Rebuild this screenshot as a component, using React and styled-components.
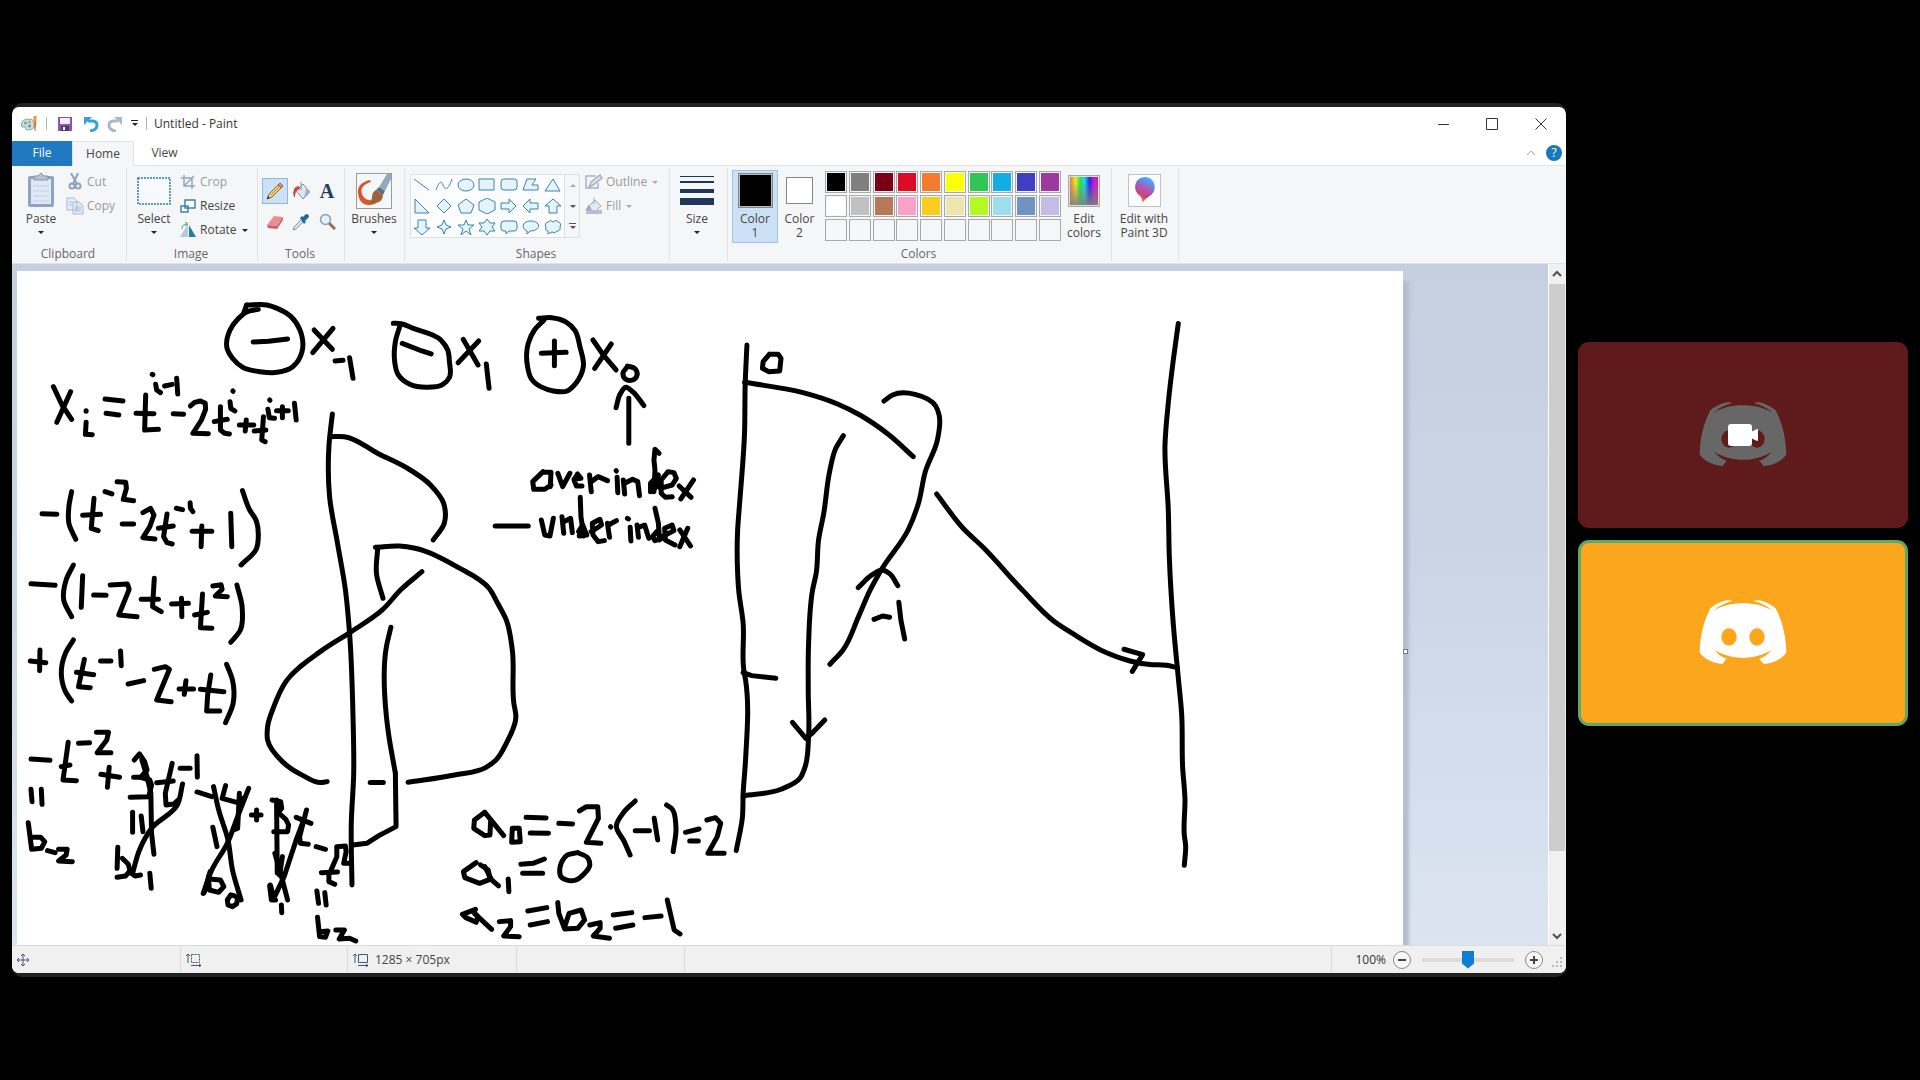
import React from "react";
import styled, { createGlobalStyle, css } from "styled-components";

const GlobalStyle = createGlobalStyle`
  * { box-sizing: border-box; }
  body { margin: 0; background: #000; overflow: hidden; }
  button, input { font: inherit; color: inherit; margin: 0; }
  button { padding: 0; border: 0; background: none; }
  svg { display: block; flex: none; }
`;

const Call = styled.div`
  display: flex;
  align-items: center;
  gap: 12px;
  min-height: 100vh;
  padding: 0 12px;
  background: #000;
  font-family: "Open Sans", "Noto Sans", sans-serif;
  font-size: 12px;
  line-height: 14px;
  color: #454545;
`;

/* ---------- Shared screen: Paint window ---------- */

const PaintWindow = styled.main`
  flex: 1;
  min-width: 0;
  aspect-ratio: 16 / 9;
  display: flex;
  flex-direction: column;
  overflow: hidden;
  border-radius: 10px;
  background: #222;
  padding: 4px 0;
`;

const Frame = styled.div`
  flex: 1;
  min-height: 0;
  display: flex;
  flex-direction: column;
  overflow: hidden;
  border-radius: 7px;
  background: #fff;
`;

const TitleBar = styled.header`
  display: flex;
  align-items: center;
  height: 34px;
  padding: 0 16px 0 8px;
  color: #333;
`;

const QuickBar = styled.div`
  display: flex;
  align-items: center;
  gap: 8px;
`;

const Divider = styled.span`
  width: 1px;
  height: 13px;
  background: #b4b4b4;
`;

const Title = styled.h1`
  margin: 0 auto 0 7px;
  font-size: 12px;
  font-weight: 400;
  line-height: 16px;
`;

const WindowButtons = styled.div`
  display: flex;
  gap: 31px;
`;

const IconButton = styled.button`
  display: flex;
  align-items: center;
  justify-content: center;
  width: ${(p) => p.$w || 18}px;
  height: ${(p) => p.$h || 18}px;
`;

const TabBar = styled.nav`
  display: flex;
  align-items: stretch;
  height: 25px;
  padding-right: 4px;
  border-bottom: 1px solid #e2e3e6;
`;

const Tab = styled.button`
  width: ${(p) => p.$w}px;
  margin-bottom: -1px;
  ${(p) =>
    p.$kind === "file" &&
    css`
      background: #2179c1;
      color: #fff;
    `}
  ${(p) =>
    p.$kind === "active" &&
    css`
      background: #f5f6f8;
      border: 1px solid #e2e3e6;
      border-bottom: 0;
    `}
`;

const TabActions = styled.div`
  display: flex;
  align-items: center;
  gap: 6px;
  margin-left: auto;
`;

const Help = styled.button`
  width: 16px;
  height: 16px;
  border-radius: 50%;
  background: #1878bd;
  color: #fff;
  font-size: 12px;
  line-height: 16px;
`;

const Ribbon = styled.div`
  display: flex;
  height: 98px;
  padding: 2px 0;
  background: #f5f6f8;
  border-bottom: 1px solid #dfe2e7;
`;

const Group = styled.section`
  display: flex;
  flex-direction: column;
  justify-content: space-between;
  width: ${(p) => p.$w}px;
  padding-top: 2px;
  border-right: 1px solid #e1e3e7;
`;

const Tools = styled.div`
  display: flex;
  align-items: flex-start;
  gap: ${(p) => p.$gap || 0}px;
  padding-left: ${(p) => p.$pl || 0}px;
`;

const GroupName = styled.h2`
  margin: 0;
  padding-right: 2px;
  font-size: 12px;
  font-weight: 400;
  line-height: 14px;
  text-align: center;
  color: #666;
`;

const BigButton = styled.button`
  display: flex;
  flex-direction: column;
  align-items: center;
  width: ${(p) => p.$w}px;
  height: 73px;
  border: 1px solid ${(p) => (p.$on ? "#9cc3e8" : "transparent")};
  background: ${(p) => (p.$on ? "#cce1f6" : "none")};
`;

const BigIcon = styled.span`
  display: flex;
  align-items: center;
  justify-content: center;
  height: 38px;
  margin: 1px 0 2px;
`;

const Caret = styled.span`
  width: 0;
  margin: ${(p) => (p.$side ? "1px 0 0 2px" : "5px 0 0")};
  border: 3px solid transparent;
  border-bottom: 0;
  border-top-color: ${(p) => (p.$off ? "#aaa" : "#222")};
`;

const Stack = styled.div`
  display: flex;
  flex-direction: column;
`;

const SmallButton = styled.button`
  display: flex;
  align-items: center;
  gap: 3px;
  height: 24px;
  color: ${(p) => (p.disabled ? "#9a9a9a" : "#454545")};
`;

const SmallIcon = styled.span`
  display: flex;
  justify-content: center;
  width: 19px;
`;

const ToolGrid = styled.div`
  display: grid;
  grid-template-columns: repeat(3, 26px);
  grid-auto-rows: 26px;
  row-gap: 5px;
  padding: 8px 0 0 4px;
`;

const ToolButton = styled.button`
  display: flex;
  align-items: center;
  justify-content: center;
  border: 1px solid ${(p) => (p.$on ? "#8fb8e0" : "transparent")};
  background: ${(p) => (p.$on ? "#cce1f6" : "none")};
`;

const Gallery = styled.div`
  display: flex;
  width: 170px;
  height: 64px;
  margin-top: 4px;
  border: 1px solid #dcdfe4;
  background: #fbfcfe;
`;

const ShapeGrid = styled.div`
  flex: 1;
  display: grid;
  grid-template-columns: repeat(7, 1fr);
  grid-template-rows: repeat(3, 1fr);
`;

const ShapeButton = styled.button`
  display: flex;
  align-items: center;
  justify-content: center;
`;

const GalleryScroll = styled.div`
  display: grid;
  width: 15px;
  border-left: 1px solid #dcdfe4;
  background: #f5f6f8;
`;

const Preview = styled.span`
  width: ${(p) => p.$s}px;
  height: ${(p) => p.$s}px;
  border: 1px solid #868686;
  background: ${(p) => p.$c};
  box-shadow: inset 0 0 0 1px ${(p) => p.$ring};
`;

const Palette = styled.div`
  display: grid;
  grid-template-columns: repeat(10, 22px);
  grid-auto-rows: 22px;
  justify-content: space-between;
  row-gap: 2px;
  width: 236px;
  margin: 1px 0 0 4px;
`;

const Swatch = styled.button`
  padding: 1px;
  border: 1px solid #a9a9a9;
  background: ${(p) => p.$c || "transparent"} content-box;
`;

/* ---------- Drawing area ---------- */

const Workspace = styled.div`
  flex: 1;
  min-height: 0;
  display: flex;
  background: linear-gradient(#c5cfde, #cbd6e5 45%, #dce4f1);
`;

const Viewport = styled.div`
  position: relative;
  flex: 1;
  min-width: 0;
  overflow: hidden;
  padding: 7px 0 0 5px;
`;

const Paper = styled.div`
  position: relative;
  width: 1386px;
  height: 757px;
  background: #fff;
  box-shadow: 7px 9px 3px -1px #b3bfd0;
`;

const Handle = styled.i`
  position: absolute;
  left: 100%;
  top: 50%;
  width: 5px;
  height: 5px;
  border: 1px solid #777;
  background: #fff;
`;

const ScrollBar = styled.div`
  display: flex;
  flex-direction: column;
  width: 18px;
  background: #f0f0f0;
  border-left: 1px solid #fff;
`;

const Thumb = styled.div`
  height: 567px;
  margin: 0 1px auto 0;
  background: #cdcdcd;
`;

/* ---------- Status bar ---------- */

const StatusBar = styled.footer`
  display: flex;
  align-items: center;
  height: 28px;
  background: #f0f0f0;
  border-top: 1px solid #dcdcdc;
`;

const StatusCell = styled.div`
  display: flex;
  align-items: center;
  gap: 6px;
  width: ${(p) => p.$w}px;
  height: 26px;
  padding-left: 5px;
  border-right: 1px solid #dadada;
`;

const Zoom = styled.div`
  display: flex;
  align-items: center;
  gap: 7px;
  margin-left: auto;
  padding-right: 2px;
  color: #333;
`;

const RoundButton = styled.button`
  display: flex;
  align-items: center;
  justify-content: center;
  width: 18px;
  height: 18px;
  border: 1px solid #8a8a8a;
  border-radius: 50%;
  background: #f7f7f7;
`;

const ZoomSlider = styled.input`
  appearance: none;
  width: 92px;
  height: 18px;
  margin: 0 4px;
  background: linear-gradient(#dcdcdc, #dcdcdc) center / 100% 4px no-repeat;
  &::-webkit-slider-thumb {
    appearance: none;
    width: 12px;
    height: 18px;
    background: #0f7dd2;
    clip-path: polygon(0 0, 100% 0, 100% 72%, 50% 100%, 0 72%);
  }
`;

const Grip = styled.svg`
  align-self: flex-end;
  margin-left: 2px;
`;

/* ---------- Participants ---------- */

const Participants = styled.aside`
  display: flex;
  flex-direction: column;
  gap: 12px;
  width: 330px;
  padding-bottom: 12px;
`;

const Tile = styled.div`
  position: relative;
  display: flex;
  align-items: center;
  justify-content: center;
  height: 186px;
  padding-bottom: 2px;
  border-radius: 11px;
  background: ${(p) => p.$bg};
  color: ${(p) => p.$fg};
  border: 3px solid ${(p) => p.$ring};
`;

const CameraBadge = styled.span`
  position: absolute;
  inset: 0;
  display: flex;
  align-items: center;
  justify-content: center;
  color: #fff;
`;

const LOGO_HALF =
  "M131 10C95 10 67 17 40 33C55 19 75 9 98 3C90 0 85 0 75 2C60 6 45 14 32 25C12 64 1 107 0 157C12 177 40 190 68 192L81 176C68 172 54 162 44 149C70 165 100 173 131 173ZM88 85a23 26 0 1 0 .1 0Z";

const ChatLogo = () => (
  <svg width="88" height="64" viewBox="0 0 260 192" fill="currentColor" fillRule="evenodd">
    <path d={LOGO_HALF} />
    <path d={LOGO_HALF} transform="translate(260 0) scale(-1 1)" />
  </svg>
);

/* ---------- Ribbon icons ---------- */

const blue = "#3f81a8";
const shapes = [
  ["Line", <path d="M1 2l15 11" />],
  ["Curve", <path d="M1 13C4 5 6 3 8 8s5 6 9-6" fill="none" />],
  ["Oval", <ellipse cx="9" cy="8" rx="8" ry="6" />],
  ["Rectangle", <path d="M1 2h15v11H1z" />],
  ["Rounded rectangle", <rect x="1" y="2" width="16" height="11" rx="3" />],
  ["Polygon", <path d="M5 2h9l-4 6h6v5H1z" />],
  ["Triangle", <path d="M9 2l7 12H1z" />],
  ["Right triangle", <path d="M2 1v14h14z" />],
  ["Diamond", <path d="M9 1l7 7-7 7-7-7z" />],
  ["Pentagon", <path d="M9 1l8 6-3 8H4L1 7z" />],
  ["Hexagon", <path d="M9 0l8 4v8l-8 4-8-4V4z" />],
  ["Right arrow", <path d="M1 5h8V1l7 7-7 7v-4H1z" />],
  ["Left arrow", <path d="M16 5H8V1L1 8l7 7v-4h8z" />],
  ["Up arrow", <path d="M5 15V8H1l8-7 8 7h-4v7z" />],
  ["Down arrow", <path d="M5 1v8H1l8 7 8-7h-4V1z" />],
  ["Four-point star", <path d="M9 1l2 5 5 2-5 2-2 5-2-5-5-2 5-2z" />],
  ["Five-point star", <path d="M9 1l2 5h6l-5 4 2 6-5-4-5 4 2-6-5-4h6z" />],
  ["Six-point star", <path d="M9 0l3 4h5l-3 4 3 4h-5l-3 4-3-4H1l3-4-3-4h5z" />],
  ["Rounded callout", <path d="M4 2h10q3 0 3 3v4q0 3-3 3H9l-3 3v-3H4q-3 0-3-3V5q0-3 3-3z" />],
  ["Oval callout", <path d="M5 12C0 10 0 5 4 3s10-1 12 2-1 7-8 7l-3 3z" />],
  ["Cloud callout", <path d="M4 3q3-3 5 0 4-3 5 0 4 1 2 5 1 4-3 4-2 3-5 1l-4 2v-3Q0 11 2 8 0 4 4 3z" />],
];

const paletteColors = [
  "#000000", "#7f7f7f", "#7b0016", "#dd0a28", "#f27b30", "#fdfd05", "#2fc655", "#11ade4", "#403fc4", "#9c399f",
  "#ffffff", "#c1c1c1", "#b57957", "#f9a1c8", "#f9cd1d", "#ece6ae", "#b3f922", "#9cdeea", "#7093c1", "#c6bbe5",
  null, null, null, null, null, null, null, null, null, null,
];

const PasteIcon = () => (
  <svg width="28" height="36" viewBox="0 0 28 36">
    <rect x="1" y="3" width="26" height="31" rx="2" fill="#8fa3c4" />
    <rect x="4" y="6" width="20" height="25" fill="#dfe8f5" />
    <path d="M6 13h16M6 18h16M6 23h16M6 28h16" stroke="#c3d0e4" />
    <path d="M7 3h4l3-3 3 3h4v4H7z" fill="#b7c1d1" stroke="#8794ab" />
  </svg>
);
const CutIcon = () => (
  <svg width="14" height="17" viewBox="0 0 14 17" fill="none" stroke="#8ea0bb" strokeWidth="2">
    <path d="M3 0l6 11M10 0L5 11" />
    <circle cx="4" cy="13" r="2.500" />
    <circle cx="10" cy="13" r="2.500" />
  </svg>
);
const CopyIcon = () => (
  <svg width="18" height="18" viewBox="0 0 18 18" fill="#e8eef7" stroke="#a9b8d0">
    <path d="M1 1h7l3 3v9H1zM7 5h6l4 4v8H7z" />
    <path d="M9 10h6M9 12h6M9 14h6M3 5h3M3 8h3" />
  </svg>
);
const SelectIcon = () => (
  <svg width="34" height="28" viewBox="0 0 34 28">
    <rect x="1" y="1" width="32" height="26" fill="#f7fafd" stroke="#2f78b5" strokeWidth="1.500" strokeDasharray="2 1" />
  </svg>
);
const CropIcon = () => (
  <svg width="14" height="14" viewBox="0 0 14 14" fill="none" stroke="#93a6c4" strokeWidth="1.500">
    <path d="M3 0v11h11M0 3h11v11M3 11L13 1" />
  </svg>
);
const ResizeIcon = () => (
  <svg width="16" height="14" viewBox="0 0 16 14" fill="#fff" stroke="#3c83ab" strokeWidth="1.500">
    <path d="M5 1h10v8H5zM1 7h7v6H1z" />
  </svg>
);
const RotateIcon = () => (
  <svg width="18" height="16" viewBox="0 0 18 16">
    <path d="M9 2v13H1z" fill="#b9c9d8" />
    <path d="M10 3l7 12h-7z" fill="#1d7fae" />
    <path d="M3 7q0-5 5-5M6 0l3 2-3 2" fill="none" stroke="#3c9bc8" />
  </svg>
);
const PencilIcon = () => (
  <svg width="18" height="18" viewBox="0 0 18 18">
    <path d="M1 17l2-5 9-9 3 3-9 9z" fill="#f6d27c" stroke="#7c6a4b" />
    <path d="M12 3l2-2 3 3-2 2z" fill="#d98b84" stroke="#8b5d58" />
    <path d="M1 17l1-3 2 2z" fill="#333" />
    <path d="M5 13l8-8" stroke="#b5893d" />
  </svg>
);
const FillIcon = () => (
  <svg width="20" height="18" viewBox="0 0 20 18">
    <path d="M5 9l7-7 7 8-7 7z" fill="#dce7f1" stroke="#7c93ab" />
    <path d="M12 17l7-7-4-4-1 6z" fill="#9db6cf" />
    <path d="M10 0v8" stroke="#7c93ab" />
    <path d="M3 15Q0 5 8 4l1 3Q4 8 4 15z" fill="#cf4a35" />
  </svg>
);
const LetterIcon = styled.span`
  font: 700 20px/20px "Liberation Serif", serif;
  color: #24395c;
`;
const EraserIcon = () => (
  <svg width="18" height="16" viewBox="0 0 18 16">
    <path d="M1 11l7-9 9 1-6 9z" fill="#eb8f94" />
    <path d="M1 11l10 1v3L2 14zM11 12l6-9v3l-6 9z" fill="#c8606a" />
  </svg>
);
const PickerIcon = () => (
  <svg width="18" height="18" viewBox="0 0 18 18">
    <path d="M1 17l1-3 8-8 2 2-8 8z" fill="#d5e3ee" stroke="#7f99af" />
    <path d="M8 5l2-2 1 1 3-3q3 0 3 3l-4 4 1 1-2 2z" fill="#20699f" />
  </svg>
);
const LensIcon = () => (
  <svg width="17" height="17" viewBox="0 0 17 17">
    <path d="M10 10l6 6" stroke="#8d6f5a" strokeWidth="3" />
    <circle cx="6.500" cy="6.500" r="5" fill="#e6f0f8" stroke="#8d9dad" strokeWidth="1.500" />
  </svg>
);
const BrushIcon = () => (
  <svg width="36" height="36" viewBox="0 0 36 36">
    <rect x=".5" y=".5" width="35" height="35" fill="#f4f8fb" stroke="#9b9b9b" />
    <path d="M14 7Q1 10 2 20c1 10 7 14 17 11l4-5C15 29 8 27 6 21S8 11 15 9z" fill="#e0512c" />
    <path d="M31 1L23 14l6 4 6-12V1z" fill="#93a9bd" />
    <path d="M23 14l6 4-2 4-7-5z" fill="#5b6f80" />
    <path d="M20 17l7 5q0 7-8 8-4 1-7 0 4-2 4-6 0-5 4-7z" fill="#9c6436" />
  </svg>
);
const OutlineIcon = () => (
  <svg width="18" height="16" viewBox="0 0 18 16" fill="none" stroke="#a7b2c6" strokeWidth="1.500">
    <path d="M11 2H1v12h12V9" />
    <path d="M4 13l2-5 9-7 2 3-9 7z" fill="#dce2ec" />
  </svg>
);
const FillShapeIcon = () => (
  <svg width="18" height="16" viewBox="0 0 18 16">
    <path d="M1 12h16v4H1z" fill="#b6c0d2" />
    <path d="M4 8l6-6 6 6-5 5H7z" fill="#e2e8f1" stroke="#9eacc3" />
    <path d="M9 0v6M4 7l-3 5h5z" fill="#9eacc3" stroke="#9eacc3" />
  </svg>
);
const SizeIcon = () => (
  <svg width="34" height="32" viewBox="0 0 34 32" fill="#22365c">
    <path d="M0 1h34v1H0zM0 6h34v2H0zM0 14h34v4H0zM0 23h34v7H0z" />
  </svg>
);
const SpectrumIcon = () => (
  <svg width="32" height="32" viewBox="0 0 32 32">
    <defs>
      <linearGradient id="hue">
        <stop offset="0" stopColor="#e87a3a" />
        <stop offset=".2" stopColor="#e8e832" />
        <stop offset=".36" stopColor="#2be53b" />
        <stop offset=".52" stopColor="#1fd5ea" />
        <stop offset=".7" stopColor="#2b23e8" />
        <stop offset=".88" stopColor="#d41ad1" />
        <stop offset="1" stopColor="#d8207a" />
      </linearGradient>
      <linearGradient id="grey" x2="0" y2="1">
        <stop offset=".2" stopColor="#808080" stopOpacity="0" />
        <stop offset="1" stopColor="#808080" stopOpacity=".9" />
      </linearGradient>
    </defs>
    <rect x=".5" y=".5" width="31" height="31" fill="#ddd" stroke="#aaa" />
    <rect x="2" y="2" width="28" height="28" fill="url(#hue)" />
    <rect x="2" y="2" width="28" height="28" fill="url(#grey)" />
  </svg>
);
const Paint3DIcon = () => (
  <svg width="33" height="33" viewBox="0 0 33 33">
    <defs>
      <linearGradient id="drop" x1=".7" y1="0" x2=".3" y2="1">
        <stop offset="0" stopColor="#43b9f3" />
        <stop offset=".4" stopColor="#7c6be0" />
        <stop offset=".7" stopColor="#c93a77" />
        <stop offset="1" stopColor="#f29a3c" />
      </linearGradient>
    </defs>
    <rect x=".5" y=".5" width="32" height="32" fill="#fcfcfd" stroke="#c2c2c2" />
    <path d="M14 29q1-5-3-8C4 15 7 3 17 3s13 13 6 18q-5 3-9 8z" fill="url(#drop)" />
    <path d="M8 14q5-7 11-4t6 3q0 6-5 8t-8-1-4-6z" fill="#e94f83" opacity=".35" />
  </svg>
);
const AppIcon = () => (
  <svg width="18" height="17" viewBox="0 0 17 17">
    <path d="M1 10Q1 4 8 4q6 0 6 5 0 6-7 6-2 0-2-2t-2-1-2-2z" fill="#c9dfe4" stroke="#7fa6ad" />
    <circle cx="5" cy="8" r="1.500" fill="#6db56d" />
    <circle cx="9" cy="7" r="1.500" fill="#e8a23d" />
    <circle cx="9" cy="11" r="1.500" fill="#5b97d6" />
    <path d="M13 1h3v6h-3z" fill="#ea9a3d" />
    <path d="M13 7h3l-1 9h-1z" fill="#e07f2b" />
  </svg>
);
const SaveIcon = () => (
  <svg width="16" height="16" viewBox="0 0 16 16">
    <path d="M1 1h14v14H1z" fill="#8657a8" />
    <path d="M3 2h10v6H3z" fill="#f2ecf7" />
    <path d="M4 10h8v5H4z" fill="#4e3866" />
    <path d="M6 11h2v3H6z" fill="#fff" />
  </svg>
);
const UndoIcon = ({ color, flip }) => (
  <svg width="16" height="16" viewBox="0 0 16 16">
    <g transform={flip ? "translate(16 0) scale(-1 1)" : undefined}>
      <path d="M5 5h4q5 0 5 4 0 5-7 6" fill="none" stroke={color} strokeWidth="3" />
      <path d="M1 1l8 0-8 8z" fill={color} />
    </g>
  </svg>
);
const SmallCaret = ({ up, bar, color = "#555" }) => (
  <svg width="9" height="8" viewBox="0 0 9 8" fill={color}>
    {bar && <path d="M1 0h7v1H1z" />}
    <path d={up ? "M2 6l3-3 3 3z" : "M2 3h6L5 6z"} />
  </svg>
);
const Chevron = ({ up, color = "#505050", w = 1 }) => (
  <svg width="10" height="8" viewBox="0 0 10 8" fill="none" stroke={color} strokeWidth={w}>
    <path d={up ? "M1 6l4-4 4 4" : "M1 2l4 4 4-4"} />
  </svg>
);

/* ---------- Pencil strokes on the paper ----------
   Each sheet keeps its own origin and scale; one string is one stroke of "x,y" points. */

const sheets = [
  {
    at: "translate(0 290) scale(.3444 .3333)",
    curves: [
      "716,45 775,45 805,55 845,80 870,118 877,140 877,185 850,230 805,247 755,245 705,232 675,205 660,178 668,120 690,88 716,66 750,58",
      "1142,100 1165,101 1200,115 1280,150 1300,180 1305,215 1305,262 1285,284 1240,292 1190,283 1155,252 1146,215 1148,155 1162,105",
      "208,605 200,650 200,700 220,748",
      "704,602 725,660 743,690 750,740 745,775 700,825",
      "965,372 955,470 957,620 980,760 1003,900 1015,1030 1025,1280 1027,1450 1020,1600 1022,1785",
      "960,440 1000,440 1100,492 1180,533 1250,585 1288,640 1290,700 1258,750",
      "1090,772 1160,768 1205,775 1330,832 1420,895 1445,940 1470,990 1487,1075 1492,1240 1498,1280 1470,1360 1440,1410 1410,1433 1320,1455 1185,1477",
      "1097,772 1093,850 1112,925",
      "1225,845 1165,898 1110,960 1020,1025 930,1085 830,1175 795,1250 777,1310 777,1350 820,1415 880,1457 930,1478 950,1475",
      "1135,1012 1122,1070 1122,1280 1128,1330 1148,1450",
    ],
    lines: [
      "716,45 708,68", "735,156 780,154 835,147",
      "912,120 965,178", "967,115 908,188", "973,213 996,211", "1015,203 1025,265",
      "1168,160 1225,183 1252,192", "1345,148 1388,225", "1390,153 1330,218", "1412,222 1420,295",
      "155,290 180,345 208,388", "205,305 165,397", "250,362 250,364", "250,397 248,433 268,434",
      "305,327 357,333", "308,370 345,375", "423,315 420,420 460,418", "395,370 447,371",
      "442,253 444,254", "452,283 455,300 466,308", "478,288 500,283", "513,265 516,312", "503,371 533,373",
      "553,348 565,337 582,333 596,340 597,358 585,390 560,430 605,431",
      "640,350 640,420 652,430 666,432", "622,395 660,388", "676,303 677,304", "668,335 670,355 682,363",
      "695,405 737,405", "715,390 712,423", "765,380 760,450 770,455", "738,423 772,420",
      "783,330 784,331", "778,358 782,383 797,385", "803,362 837,362", "820,350 820,383", "855,340 860,390",
      "122,671 165,673", "273,625 265,715 285,722", "240,676 292,673", "305,605 325,612",
      "340,575 365,577 367,595 358,628 388,632", "355,702 388,702",
      "415,668 437,655 447,675 435,710 415,743 450,747",
      "485,672 475,740 485,758 500,762", "460,715 503,708", "512,655 530,659", "552,638 553,655 560,665",
      "558,724 615,724", "586,708 584,770", "670,670 673,770",
      "1075,1478 1113,1478", "1148,1450 1150,1610 1100,1637 1065,1660 1025,1665",
    ],
  },
  {
    at: "translate(0 580) scale(.3444 .3333)",
    curves: [
      "213,-45 192,0 185,60 208,110", "688,15 703,80 698,150 670,187",
      "213,180 190,220 178,280 190,335 208,363", "658,253 675,300 677,370 655,428",
      "530,612 515,675 440,745 405,810 385,880",
      "722,625 690,710 660,790 615,870 590,940", "620,620 635,690 662,780 675,870 700,960",
    ],
    lines: [
      "90,11 160,16", "240,-13 236,82", "272,45 308,46", "320,15 370,12 375,28 345,105 398,110",
      "448,-5 443,80 468,95", "410,58 460,58", "498,72 547,70", "527,55 528,110",
      "588,42 582,143 615,145", "565,105 602,97", "618,18 642,14 645,28 625,48 660,50",
      "88,243 133,248", "116,210 115,272", "245,238 228,320 262,323", "222,277 272,284",
      "292,243 322,243", "350,213 352,257", "372,312 417,302", "448,268 480,260 492,268 455,360 497,365",
      "520,327 562,327", "540,302 535,343", "612,285 603,345 600,393 638,393", "582,328 650,335",
      "90,537 145,541", "198,487 183,600 222,602", "178,560 203,555", "228,490 260,488",
      "280,457 315,457 310,480 282,518 322,518", "293,583 347,592", "317,562 312,622",
      "390,540 405,522 420,545 427,570 408,592 388,592", "408,592 435,600 440,615 432,650 378,652",
      "412,540 427,590 438,640 440,760 447,823", "425,590 438,615", "500,550 480,640 482,675 505,672 518,660", "455,608 503,603",
      "523,565 552,565", "572,527 573,592", "90,628 93,665", "120,628 122,673",
      "82,728 92,808 120,805 130,785 118,772 92,772", "138,812 160,818", "170,808 195,808 192,825 170,843 210,845",
      "385,697 385,757", "410,708 415,755", "342,802 340,865", "355,835 372,852 378,872 365,888 340,892",
      "375,875 392,888 408,885", "435,880 439,925", "572,636 615,650", "655,617 645,655 690,668 705,655",
      "695,640 690,745 682,748", "618,742 630,800", "610,875 593,938", "605,890 608,930 635,937 650,920 640,900 615,898",
      "670,945 660,960 662,975 675,980 687,972 690,955 680,947 670,945", "730,705 758,705", "745,690 745,720",
      "790,660 815,665 818,685 805,700", "803,660 805,880", "812,702 830,718 838,735 835,755 795,755",
      "890,690 870,770 872,790 895,793", "860,712 903,730", "880,725 860,780 825,890 795,955 785,915",
      "783,918 788,960 800,960", "798,820 815,880 835,960", "820,830 812,885", "806,840 812,885", "817,975 818,998",
      "918,800 945,808", "978,803 978,830 955,885 955,905 972,913", "933,878 980,876", "978,800 1003,798 1005,815 998,850 1015,850",
      "920,933 925,970", "943,938 947,975", "922,1012 928,1070 945,1072 952,1053 930,1055",
      "975,1050 1000,1050 985,1077 1015,1075 1033,1083",
    ],
  },
  {
    at: "translate(500 290) scale(.3444 .3333)",
    curves: [
      "112,85 150,83 190,95 218,122 232,170 242,230 220,280 195,303 155,303 90,265 80,230 82,160 100,120 128,90",
      "717,165 712,280 710,430 695,650 690,720 690,850 693,900 706,1000 708,1140 713,1170 713,1410 706,1510 704,1580 686,1682",
      "710,277 880,308 980,342 1045,375 1130,435 1200,500",
      "997,437 975,475 958,540 940,670 925,750 918,850 908,898 896,1060 895,1200 896,1340 886,1430 871,1465 816,1498 706,1518",
      "1115,333 1140,315 1205,313 1265,348 1275,375 1270,450 1235,545 1215,640 1185,720 1110,835 1075,900 1041,980 996,1080 958,1123",
      "337,353 350,310 365,292 385,305 418,347",
      "1040,893 1080,855 1110,840 1130,850 1155,887",
      "370,230 357,250 365,268 385,270 398,255 393,237 370,228",
    ],
    lines: [
      "-14,708 82,708", "120,190 192,187", "158,153 158,227", "270,150 300,195 337,240", "323,162 275,235", "374,325 374,460",
      "125,545 95,575 98,598 130,598 148,585", "125,547 148,547 146,590",
      "168,550 182,590 203,550", "215,568 235,565 225,552 215,570 222,588 238,588",
      "260,555 265,605", "265,575 285,560 312,572", "337,542 338,543", "340,562 342,608",
      "358,570 362,612", "362,580 385,568 400,575 405,617", "462,490 450,478 447,510 450,540 447,605",
      "437,605 437,580 460,555 455,590 437,605", "465,595 500,585 512,565 505,548 488,545 468,570 468,610 480,622 500,620",
      "520,588 555,622", "562,570 525,627", "120,690 130,735 145,738 155,685", "180,680 185,730",
      "185,695 205,685 210,728", "233,622 235,680 243,735", "243,738 228,725 240,705 252,735 230,738",
      "265,725 295,705 290,688 268,700 270,735 285,755 303,752", "312,700 318,742", "315,705 338,692",
      "370,685 373,687", "378,712 380,753", "398,705 402,742", "402,712 420,705 432,745",
      "450,655 460,700 463,750", "450,752 443,740 455,725 470,745 450,752", "475,738 505,722 500,705 478,715 480,750 508,765",
      "522,720 553,768", "545,715 522,770", "782,193 808,193 816,205 812,243 780,245 762,235 764,215 782,193",
      "849,1297 888,1345 906,1330 943,1290", "706,1148 731,1157 801,1165",
      "1086,988 1111,978 1131,982", "1158,937 1164,990 1175,1047",
    ],
  },
  {
    at: "translate(440 580) scale(.3444 .3333)",
    curves: [
      "567,663 535,695 512,738 535,785 552,825", "658,675 672,685 685,740 677,815",
      "400,818 430,835 435,855 420,880 388,902 350,888 348,865 370,825 400,818",
    ],
    lines: [
      "130,697 100,720 98,745 130,767 145,765 147,725", "130,697 185,767", "210,745 230,745 233,785 208,787 210,745",
      "250,712 308,714", "262,759 315,760", "345,730 385,732", "405,693 425,680 458,680 460,715 425,787 467,790",
      "495,740 496,741", "567,752 608,752", "622,715 632,780", "713,757 752,747", "725,783 750,783",
      "775,720 800,713 815,730 805,770 778,820 825,820",
      "105,848 68,875 72,893 115,910 145,898 140,870 118,855", "130,860 150,900 170,918", "198,897 200,935",
      "235,853 270,850 303,837", "240,880 298,880", "103,988 65,1003 75,1013 105,1027 110,1010 95,993",
      "100,1000 150,1048", "172,1025 205,1022 205,1040 185,1068 230,1070", "255,993 310,983", "262,1035 312,1025",
      "342,968 345,1000 362,1047 400,1045 420,1020 410,990 375,1000 362,1040",
      "435,1035 465,1028 465,1045 445,1068 492,1075", "503,1005 557,998", "510,1045 560,1035",
      "595,1013 642,1008", "660,960 680,1050 697,1062",
    ],
  },
  {
    at: "translate(840 310) scale(.3333 .3571)",
    curves: [
      "290,515 370,612 430,665 545,782 640,870 700,907 800,960 870,983 930,993 980,995 1012,1002",
      "1015,38 1000,140 985,260 975,380 985,560 988,690 1000,880 1015,1030 1025,1130 1028,1280 1035,1370 1033,1470 1037,1500 1033,1555",
    ],
    lines: ["852,950 908,965 877,1012"],
  },
];

/* A smooth line through the points: slopes weighted by the length of the
   neighbouring segments, written as cubic pieces. */
const smooth = (text) => {
  const p = text.split(" ").map((s) => s.split(",").map(Number));
  const last = p.length - 1;
  const len = (i) => Math.hypot(p[i + 1][0] - p[i][0], p[i + 1][1] - p[i][1]) || 1;
  const step = (i, k) => (p[i + 1][k] - p[i][k]) / len(i);
  const slope = (i, k) => {
    if (i === 0) return step(0, k);
    if (i === last) return step(last - 1, k);
    const before = len(i - 1);
    const after = len(i);
    return (step(i - 1, k) * after + step(i, k) * before) / (before + after);
  };
  let d = `M${p[0]}`;
  for (let i = 0; i < last; i += 1) {
    const t = len(i) / 3;
    const c1 = [0, 1].map((k) => p[i][k] + slope(i, k) * t);
    const c2 = [0, 1].map((k) => p[i + 1][k] - slope(i + 1, k) * t);
    d += `C${c1.join(" ")} ${c2.join(" ")} ${p[i + 1].join(" ")}`;
  }
  return d;
};

const Drawing = () => (
  <svg
    width="1386"
    height="757"
    viewBox="17 271 1386 757"
    fill="none"
    stroke="#000"
    strokeWidth="5"
    strokeLinecap="round"
    strokeLinejoin="round"
    role="img"
    aria-label="Handwritten notes"
  >
    {sheets.map((s) => (
      <g key={s.at} transform={s.at}>
        {s.curves.map((c) => (
          <path key={c} d={smooth(c)} vectorEffect="non-scaling-stroke" />
        ))}
        {s.lines.map((l) => (
          <polyline key={l} points={l} vectorEffect="non-scaling-stroke" />
        ))}
      </g>
    ))}
  </svg>
);

const Big = ({ icon, children, caret, ...rest }) => (
  <BigButton {...rest}>
    <BigIcon>{icon}</BigIcon>
    <span>{children}</span>
    {caret && <Caret />}
  </BigButton>
);

const Small = ({ icon, children, caret, disabled }) => (
  <SmallButton disabled={disabled}>
    <SmallIcon>{icon}</SmallIcon>
    {children}
    {caret && <Caret $side $off={disabled} />}
  </SmallButton>
);

export default function App() {
  return (
    <Call>
      <GlobalStyle />
      <PaintWindow>
        <Frame>
          <TitleBar>
            <QuickBar>
              <AppIcon />
              <Divider />
              <IconButton $w={20} aria-label="Save"><SaveIcon /></IconButton>
              <IconButton $w={16} aria-label="Undo"><UndoIcon color="#35a3d8" /></IconButton>
              <IconButton $w={16} aria-label="Redo"><UndoIcon color="#a9b7c6" flip /></IconButton>
              <IconButton $w={7} aria-label="Customize"><SmallCaret bar color="#222" /></IconButton>
              <Divider />
            </QuickBar>
            <Title>Untitled - Paint</Title>
            <WindowButtons>
              <IconButton aria-label="Minimize">
                <svg width="12" height="12" stroke="#333"><path d="M1 6.500h11" /></svg>
              </IconButton>
              <IconButton aria-label="Maximize">
                <svg width="12" height="12" fill="none" stroke="#333"><path d="M.5.5h11v11H.5z" /></svg>
              </IconButton>
              <IconButton aria-label="Close">
                <svg width="12" height="12" stroke="#333"><path d="M.5.5l11 11M11.500.5l-11 11" /></svg>
              </IconButton>
            </WindowButtons>
          </TitleBar>
          <TabBar>
            <Tab $w={60} $kind="file">File</Tab>
            <Tab $w={62} $kind="active">Home</Tab>
            <Tab $w={61}>View</Tab>
            <TabActions>
              <IconButton aria-label="Collapse ribbon"><Chevron up color="#a5a5a5" /></IconButton>
              <Help>?</Help>
            </TabActions>
          </TabBar>
          <Ribbon>
            <Group $w={115}>
              <Tools $pl={6} $gap={1}>
                <Big $w={46} icon={<PasteIcon />} caret>Paste</Big>
                <Stack>
                  <Small disabled icon={<CutIcon />}>Cut</Small>
                  <Small disabled icon={<CopyIcon />}>Copy</Small>
                </Stack>
              </Tools>
              <GroupName>Clipboard</GroupName>
            </Group>
            <Group $w={131}>
              <Tools $pl={4} $gap={1}>
                <Big $w={46} icon={<SelectIcon />} caret>Select</Big>
                <Stack>
                  <Small disabled icon={<CropIcon />}>Crop</Small>
                  <Small icon={<ResizeIcon />}>Resize</Small>
                  <Small icon={<RotateIcon />} caret>Rotate</Small>
                </Stack>
              </Tools>
              <GroupName>Image</GroupName>
            </Group>
            <Group $w={87}>
              <ToolGrid>
                <ToolButton $on aria-label="Pencil"><PencilIcon /></ToolButton>
                <ToolButton aria-label="Fill"><FillIcon /></ToolButton>
                <ToolButton aria-label="Text"><LetterIcon>A</LetterIcon></ToolButton>
                <ToolButton aria-label="Eraser"><EraserIcon /></ToolButton>
                <ToolButton aria-label="Color picker"><PickerIcon /></ToolButton>
                <ToolButton aria-label="Magnifier"><LensIcon /></ToolButton>
              </ToolGrid>
              <GroupName>Tools</GroupName>
            </Group>
            <Group $w={60}>
              <Tools $pl={3}>
                <Big $w={52} icon={<BrushIcon />} caret>Brushes</Big>
              </Tools>
            </Group>
            <Group $w={265}>
              <Tools $pl={5} $gap={4}>
                <Gallery>
                  <ShapeGrid>
                    {shapes.map(([name, mark]) => (
                      <ShapeButton key={name} aria-label={name}>
                        <svg width="18" height="16" viewBox="0 0 18 16" fill="#e3f4fb" stroke={blue}>{mark}</svg>
                      </ShapeButton>
                    ))}
                  </ShapeGrid>
                  <GalleryScroll>
                    <ShapeButton aria-label="Scroll up"><SmallCaret up color="#aaa" /></ShapeButton>
                    <ShapeButton aria-label="Scroll down"><SmallCaret /></ShapeButton>
                    <ShapeButton aria-label="More shapes"><SmallCaret bar /></ShapeButton>
                  </GalleryScroll>
                </Gallery>
                <Stack>
                  <Small disabled caret icon={<OutlineIcon />}>Outline</Small>
                  <Small disabled caret icon={<FillShapeIcon />}>Fill</Small>
                </Stack>
              </Tools>
              <GroupName>Shapes</GroupName>
            </Group>
            <Group $w={58}>
              <Tools $pl={4}>
                <Big $w={46} icon={<SizeIcon />} caret>Size</Big>
              </Tools>
            </Group>
            <Group $w={384}>
              <Tools $pl={4}>
                <Big $w={46} $on icon={<Preview $s={35} $c="#000" $ring="#bbb" />}>Color<br />1</Big>
                <Big $w={43} icon={<Preview $s={27} $c="#fff" $ring="#fff" />}>Color<br />2</Big>
                <Palette>
                  {paletteColors.map((c, i) => (
                    <Swatch key={i} $c={c} aria-label={c ? `Color ${c}` : "Empty color"} />
                  ))}
                </Palette>
                <Big $w={46} icon={<SpectrumIcon />}>Edit<br />colors</Big>
              </Tools>
              <GroupName>Colors</GroupName>
            </Group>
            <Group $w={67}>
              <Tools $pl={2}>
                <Big $w={60} icon={<Paint3DIcon />}>Edit with<br />Paint 3D</Big>
              </Tools>
            </Group>
          </Ribbon>
          <Workspace>
            <Viewport>
              <Paper>
                <Drawing />
                <Handle />
              </Paper>
            </Viewport>
            <ScrollBar>
              <IconButton $h={20} $w={16} aria-label="Scroll up"><Chevron up w={2} /></IconButton>
              <Thumb />
              <IconButton $h={18} $w={16} aria-label="Scroll down"><Chevron w={2} /></IconButton>
            </ScrollBar>
          </Workspace>
          <StatusBar>
            <StatusCell $w={169}>
              <svg width="12" height="12" viewBox="0 0 12 12" fill="none" stroke="#3f5878">
                <path d="M6 0v12M0 6h12M4 2l2-2 2 2M4 10l2 2 2-2M2 4L0 6l2 2M10 4l2 2-2 2" />
              </svg>
            </StatusCell>
            <StatusCell $w={167}>
              <svg width="16" height="14" viewBox="0 0 16 14" fill="none" stroke="#3f5878">
                <path d="M2 1v9M0 3l2-2 2 2M5 12.500h10M13 11l2 1.500-2 1.500" />
                <path d="M5.500 1.500h8v8h-8z" strokeDasharray="2 1" />
              </svg>
            </StatusCell>
            <StatusCell $w={169}>
              <svg width="16" height="14" viewBox="0 0 16 14" fill="none" stroke="#3f5878">
                <path d="M2 1v9M0 3l2-2 2 2M5 12.500h10M13 11l2 1.500-2 1.500M5.500 1.500h9v8h-9z" />
              </svg>
              1285 × 705px
            </StatusCell>
            <StatusCell $w={168} />
            <StatusCell $w={647} />
            <Zoom>
              <label htmlFor="zoom">100%</label>
              <RoundButton aria-label="Zoom out">
                <svg width="10" height="10" stroke="#444" strokeWidth="2"><path d="M1 5h8" /></svg>
              </RoundButton>
              <ZoomSlider id="zoom" type="range" min="0" max="100" defaultValue="50" />
              <RoundButton aria-label="Zoom in">
                <svg width="10" height="10" stroke="#444" strokeWidth="2"><path d="M1 5h8M5 1v8" /></svg>
              </RoundButton>
              <Grip width="12" height="12" fill="#bbb">
                <path d="M8 0h2v2H8zM8 4h2v2H8zM4 4h2v2H4zM8 8h2v2H8zM4 8h2v2H4zM0 8h2v2H0z" />
              </Grip>
            </Zoom>
          </StatusBar>
        </Frame>
      </PaintWindow>
      <Participants>
        <Tile $bg="#5f1a1b" $fg="#676767" $ring="#5f1a1b">
          <ChatLogo />
          <CameraBadge>
            <svg width="30" height="22" viewBox="0 0 30 22" fill="currentColor">
              <rect width="24" height="22" rx="3" />
              <path d="M23 8l6-3q1 0 1 1v10q0 1-1 1l-6-3z" />
            </svg>
          </CameraBadge>
        </Tile>
        <Tile $bg="#fca61e" $fg="#fff" $ring="#5da76a">
          <ChatLogo />
        </Tile>
      </Participants>
    </Call>
  );
}
